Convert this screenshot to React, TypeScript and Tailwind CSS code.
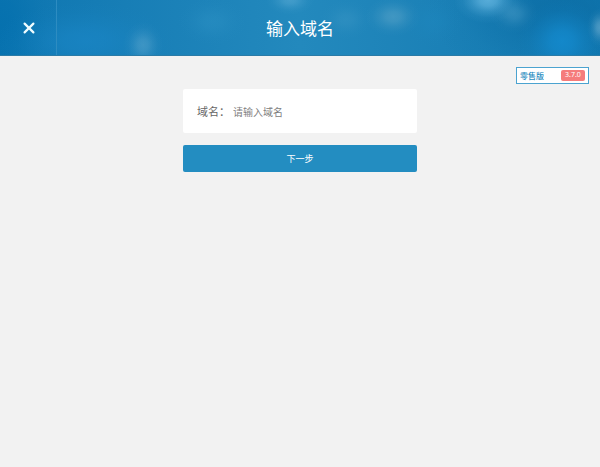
import { useState } from "react";

const glows = [
  { cx: 0, cy: 28, rx: 60, ry: 90, color: "#0470ae", opacity: 0.8 },
  { cx: 85, cy: 42, rx: 90, ry: 40, color: "#1a86c6", opacity: 0.7 },
  { cx: 143, cy: 46, rx: 20, ry: 24, color: "#5aa5cd", opacity: 0.55 },
  { cx: 212, cy: 22, rx: 34, ry: 24, color: "#3196c8", opacity: 0.35 },
  { cx: 290, cy: 0, rx: 24, ry: 15, color: "#62b0d8", opacity: 0.5 },
  { cx: 346, cy: 20, rx: 26, ry: 20, color: "#3d98c6", opacity: 0.4 },
  { cx: 393, cy: 17, rx: 28, ry: 20, color: "#62a9cb", opacity: 0.5 },
  { cx: 556, cy: 12, rx: 130, ry: 70, color: "#0a6ba3", opacity: 0.7 },
  { cx: 433, cy: 22, rx: 30, ry: 26, color: "#1d86bd", opacity: 0.6 },
  { cx: 488, cy: 0, rx: 34, ry: 24, color: "#6dbde6", opacity: 0.75 },
  { cx: 514, cy: 14, rx: 24, ry: 20, color: "#4a9dc8", opacity: 0.5 },
  { cx: 562, cy: 42, rx: 44, ry: 42, color: "#148bcf", opacity: 0.85 },
  { cx: 600, cy: 28, rx: 13, ry: 20, color: "#60a5cb", opacity: 0.75 },
];

const HeaderBackdrop = () => {
  return (
    <svg
      className="absolute inset-0 h-full w-full"
      viewBox="0 0 600 56"
      preserveAspectRatio="none"
      aria-hidden="true"
    >
      <defs>
        {glows.map((glow, i) => (
          <radialGradient key={i} id={`glow-${i}`}>
            <stop offset="0" stopColor={glow.color} stopOpacity={glow.opacity} />
            <stop
              offset="0.25"
              stopColor={glow.color}
              stopOpacity={glow.opacity * 0.82}
            />
            <stop
              offset="0.5"
              stopColor={glow.color}
              stopOpacity={glow.opacity * 0.42}
            />
            <stop
              offset="0.75"
              stopColor={glow.color}
              stopOpacity={glow.opacity * 0.12}
            />
            <stop offset="1" stopColor={glow.color} stopOpacity="0" />
          </radialGradient>
        ))}
      </defs>
      {glows.map((glow, i) => (
        <ellipse
          key={i}
          cx={glow.cx}
          cy={glow.cy}
          rx={glow.rx}
          ry={glow.ry}
          fill={`url(#glow-${i})`}
        />
      ))}
    </svg>
  );
};

const Header = () => {
  return (
    <header className="relative h-14 overflow-hidden border-b border-[#2b7ba6] bg-linear-to-r from-[#0d76b1] via-[#2389bd] to-[#1178b0]">
      <HeaderBackdrop />
      <div className="relative grid h-full grid-cols-[57px_1fr_57px] items-center">
        <button
          type="button"
          aria-label="关闭"
          className="flex h-full items-center justify-center border-r border-[#2d8cc1] pl-[2px]"
        >
          <svg
            className="h-3 w-3"
            viewBox="0 0 12 12"
            fill="none"
            stroke="#effcff"
            strokeWidth="2.2"
            strokeLinecap="round"
          >
            <path d="M1.6 1.6l8.8 8.8M10.4 1.6l-8.8 8.8" />
          </svg>
        </button>
        <h1 className="pt-[2px] text-center text-[17px] text-white">输入域名</h1>
      </div>
    </header>
  );
};

const VersionTag = () => {
  return (
    <div className="flex h-[17px] w-[73px] items-center justify-between border border-[#4ba3d0] bg-white px-[3px]">
      <span className="text-[8px] font-medium text-[#2a8dbf]">零售版</span>
      <span className="flex h-[11px] w-6 items-center justify-center rounded-xs bg-[#f57c7c] text-[7px] text-white">
        3.7.0
      </span>
    </div>
  );
};

const App = () => {
  const [domain, setDomain] = useState("");

  return (
    <div className="min-h-screen bg-[#f2f2f2] font-['Noto_Sans','Noto_Sans_CJK_SC',sans-serif]">
      <Header />
      <main>
        <div className="flex justify-end px-[11px] pt-[11px]">
          <VersionTag />
        </div>
        <form
          className="mx-auto mt-[5px] w-[39%]"
          onSubmit={(e) => e.preventDefault()}
        >
          <div className="flex h-11 items-center rounded-xs bg-white px-[14px] pt-[2px]">
            <label htmlFor="domain" className="text-[11px] text-[#666]">
              域名：
            </label>
            <input
              id="domain"
              type="text"
              value={domain}
              onChange={(e) => setDomain(e.target.value)}
              placeholder="请输入域名"
              className="ml-[3px] min-w-0 flex-1 text-[10px] text-[#666] outline-none placeholder:text-[#808080]"
            />
          </div>
          <button
            type="submit"
            className="mt-3 flex h-[27px] w-full items-center justify-center rounded-xs bg-[#238dc1] text-[9px] text-white"
          >
            下一步
          </button>
        </form>
      </main>
    </div>
  );
};

export default App;
